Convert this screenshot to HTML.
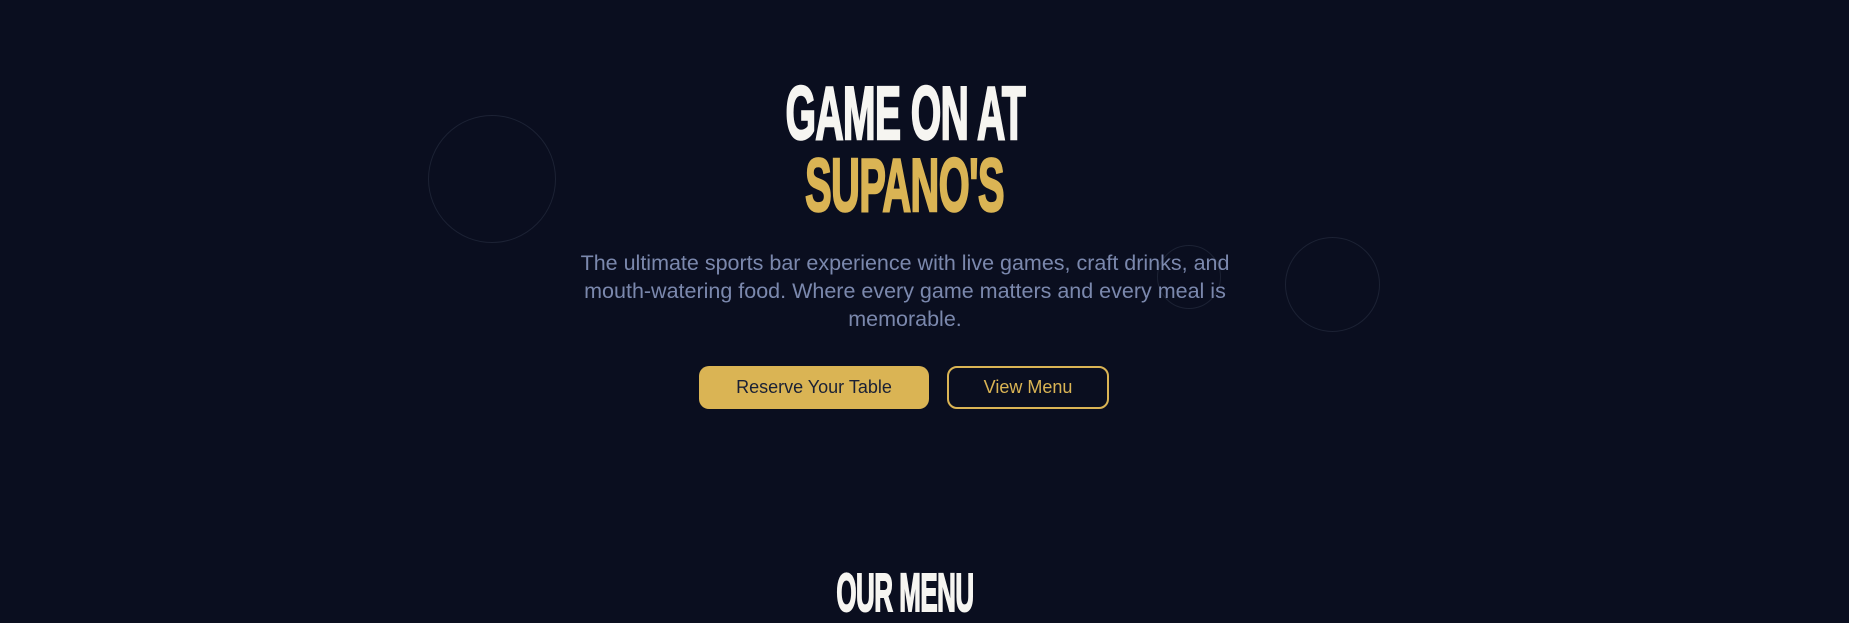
<!DOCTYPE html>
<html><head><meta charset="utf-8"><style>
html,body{margin:0;padding:0;}
body{width:1849px;height:612px;overflow:hidden;background:#0a0e1f;position:relative;font-family:"Liberation Sans",sans-serif;}
.line{position:absolute;left:0;width:1810px;text-align:center;line-height:1;}
.line span{display:inline-block;font-family:"Liberation Sans Narrow","Liberation Sans",sans-serif;font-weight:bold;transform-origin:center;letter-spacing:-1px;}
.circ{position:absolute;border:1px solid #1c2234;border-radius:50%;box-sizing:border-box;}
p{position:absolute;left:505px;width:800px;top:249px;margin:0;text-align:center;font-size:21.5px;line-height:28px;color:#7b88ad;}
.btn{position:absolute;top:366px;height:43px;box-sizing:border-box;border-radius:10px;font-size:18px;display:flex;align-items:center;justify-content:center;}
</style></head><body>
<div class="circ" style="left:428px;top:115px;width:128px;height:128px;"></div>
<div class="circ" style="left:1285px;top:237px;width:95px;height:95px;"></div>
<div class="circ" style="left:1157px;top:245px;width:64px;height:64px;"></div>
<div class="line" style="top:76px;"><span style="font-size:75px;color:#f6f5f1;-webkit-text-stroke:2.5px #f6f5f1;transform:scaleX(0.52);">GAME ON AT</span></div>
<div class="line" style="top:148px;"><span style="font-size:75px;color:#dab454;-webkit-text-stroke:2.5px #dab454;transform:scaleX(0.53);">SUPANO'S</span></div>
<p>The ultimate sports bar experience with live games, craft drinks, and<br>mouth-watering food. Where every game matters and every meal is<br>memorable.</p>
<div class="btn" style="left:699px;width:230px;background:#dab454;color:#1a2035;">Reserve Your Table</div>
<div class="btn" style="left:947px;width:162px;border:2px solid #dab454;color:#dab454;">View Menu</div>
<div class="line" style="top:566px;"><span style="font-size:54px;color:#f6f5f1;-webkit-text-stroke:2px #f6f5f1;transform:scaleX(0.48);">OUR MENU</span></div>
</body></html>
